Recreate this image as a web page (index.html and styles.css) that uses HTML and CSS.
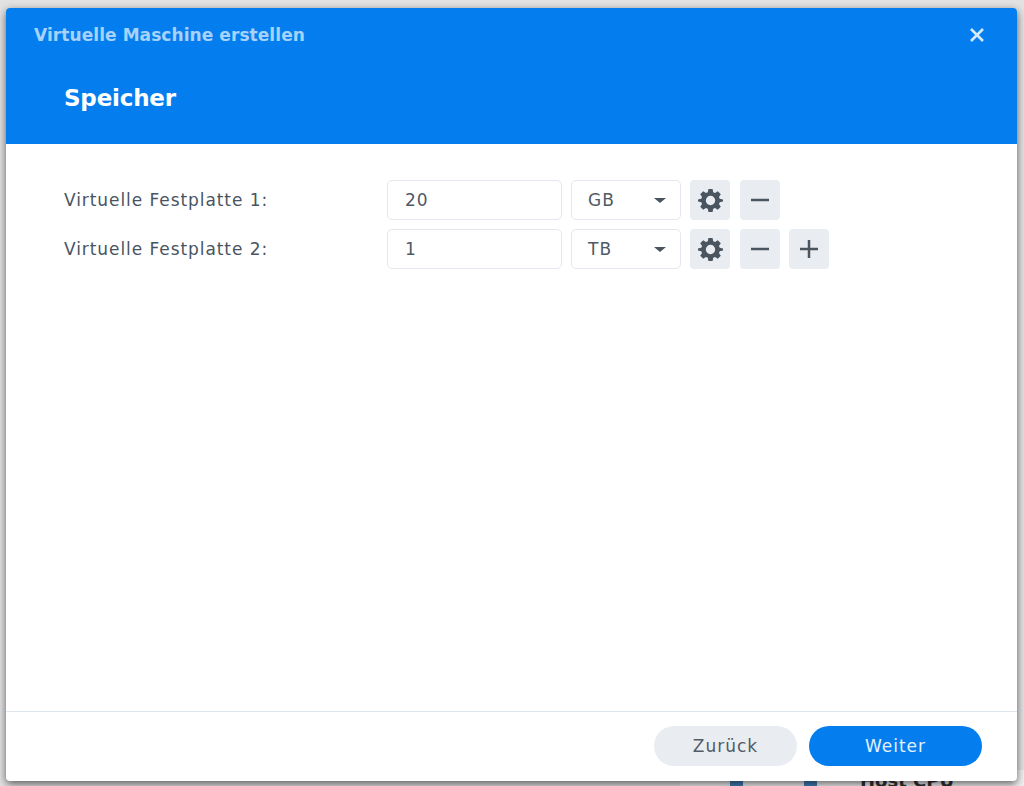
FILE: index.html
```html
<!DOCTYPE html>
<html lang="de">
<head>
<meta charset="utf-8">
<title>Virtuelle Maschine erstellen</title>
<link rel="stylesheet" href="styles.css">
</head>
<body>
<div class="backdrop">
  <div class="bg-panel">
    <span class="bg-bar bg-bar-a"></span>
    <span class="bg-bar bg-bar-b"></span>
    <span class="bg-text">Host CPU</span>
  </div>
</div>
<main class="dialog">
  <header class="head">
    <div class="head-top">
      <span class="app-title">Virtuelle Maschine erstellen</span>
      <svg class="close" viewBox="0 0 16 16" aria-label="Schließen"><path d="M2 2L14 14M14 2L2 14"/></svg>
    </div>
    <h1 class="step-title">Speicher</h1>
  </header>
  <section class="body">
    <div class="row">
      <label class="label">Virtuelle Festplatte 1:</label>
      <div class="input">20</div>
      <div class="select"><span>GB</span><i class="caret"></i></div>
      <button class="icon-btn icon-btn-gear"><svg class="gear" viewBox="0 0 24 24"><use href="#gear-shape"/></svg></button>
      <button class="icon-btn"><svg class="sym" viewBox="0 0 20 20"><path d="M1 10H19"/></svg></button>
    </div>
    <div class="row">
      <label class="label">Virtuelle Festplatte 2:</label>
      <div class="input">1</div>
      <div class="select"><span>TB</span><i class="caret"></i></div>
      <button class="icon-btn icon-btn-gear"><svg class="gear" viewBox="0 0 24 24"><use href="#gear-shape"/></svg></button>
      <button class="icon-btn"><svg class="sym" viewBox="0 0 20 20"><path d="M1 10H19"/></svg></button>
      <button class="icon-btn"><svg class="sym" viewBox="0 0 20 20"><path d="M1 10H19M10 1V19"/></svg></button>
    </div>
  </section>
  <footer class="foot">
    <button class="pill pill-back">Zurück</button>
    <button class="pill pill-next">Weiter</button>
  </footer>
</main>
<svg class="defs" width="0" height="0">
  <defs>
    <path id="gear-shape" fill-rule="evenodd" d="M10 1h4l.6 3.1 1.8.8L19 3.100l2.900 2.900-1.800 2.600.8 1.800L24 11v2l-3.100.6-.8 1.800 1.800 2.600-2.900 2.900-2.600-1.800-1.800.8L14 23h-4l-.6-3.100-1.800-.8L5 20.900 2.100 18l1.800-2.600-.8-1.800L0 13v-2l3.100-.6.8-1.800L2.100 6 5 3.100l2.600 1.800 1.800-.8zM12 7.500a4.500 4.500 0 1 0 0 9 4.500 4.500 0 0 0 0-9z"/>
  </defs>
</svg>
</body>
</html>
```
FILE: styles.css
```css
* { box-sizing: border-box; }
html, body { margin: 0; height: 100%; }
body {
  width: 1024px;
  height: 786px;
  overflow: hidden;
  position: relative;
  background: #e2e2e2;
  font-family: "DejaVu Sans", sans-serif;
}
.backdrop { position: absolute; inset: 0; overflow: hidden; }
.bg-panel { position: absolute; left: 680px; top: 770px; width: 344px; height: 30px; background: #f0f0f0; }
.bg-bar { position: absolute; top: 8px; width: 13px; height: 20px; background: #3f7fb5; }
.bg-bar-a { left: 50px; }
.bg-bar-b { left: 124px; }
.bg-text { position: absolute; left: 180px; top: 0; font-size: 18px; font-weight: 700; color: #333; }
.dialog {
  position: absolute;
  left: 6px;
  top: 8px;
  width: 1011px;
  height: 773px;
  display: flex;
  flex-direction: column;
  background: #fff;
  border-radius: 4px;
  box-shadow: 0 3px 8px rgba(0,0,0,.6);
}
.head {
  height: 136px;
  flex: none;
  background: #047eee;
  border-radius: 4px 4px 0 0;
  color: #fff;
}
.head-top {
  height: 54px;
  padding: 0 32px 0 28px;
  display: flex;
  align-items: center;
  justify-content: space-between;
}
.app-title { font-size: 17px; font-weight: 700; color: #a6d2fb; letter-spacing: .07px; }
.close { width: 16px; height: 16px; fill: none; stroke: #d5eafd; stroke-width: 2.600; }
.step-title { margin: 0; padding: 21px 0 0 58px; font-size: 23px; line-height: 30px; font-weight: 700; letter-spacing: -.2px; }
.body { flex: 1; padding: 36px 0 0 58px; display: flex; flex-direction: column; gap: 9px; }
.row { display: flex; align-items: center; height: 40px; gap: 9px; }
.label { width: 314px; font-size: 17px; letter-spacing: .93px; color: #49545f; }
.input, .select {
  height: 40px;
  border: 1.500px solid #e3e8ee;
  border-radius: 5px;
  background: #fff;
  font-size: 17px;
  letter-spacing: 1px;
  color: #4f5a65;
  display: flex;
  align-items: center;
}
.input { width: 175px; padding-left: 17px; }
.select { width: 110px; padding: 0 14px 0 16px; justify-content: space-between; }
.caret { width: 0; height: 0; border-left: 6px solid transparent; border-right: 6px solid transparent; border-top: 5px solid #4a5560; }
.icon-btn {
  width: 40px;
  height: 40px;
  padding: 0;
  border: 0;
  border-radius: 4px;
  background: #e9edf2;
  display: flex;
  align-items: center;
  justify-content: center;
}
.icon-btn-gear { margin-right: 1px; }
.gear { width: 25px; height: 25px; fill: #4a5560; }
.sym { width: 20px; height: 20px; fill: none; stroke: #4a5560; stroke-width: 2.500; }
.foot {
  height: 70px;
  flex: none;
  border-top: 1px solid #dde6ee;
  display: flex;
  justify-content: flex-end;
  align-items: center;
  gap: 12px;
  padding: 0 35px 2px 0;
}
.pill { height: 40px; border: 0; border-radius: 20px; font-size: 17px; letter-spacing: 1px; font-family: "DejaVu Sans", sans-serif; }
.pill-back { width: 143px; background: #e9edf2; color: #525c66; }
.pill-next { width: 173px; background: #047eee; color: #e4f1fd; }
.defs { position: absolute; }
```
